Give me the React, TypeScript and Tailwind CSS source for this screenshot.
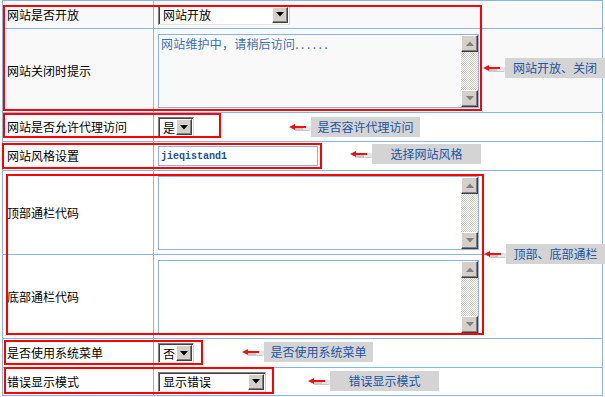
import React from "react";

const Tri: React.FC<{ down?: boolean; color?: string }> = ({ down = true, color = "#000" }) => (
  <svg width="8" height="5" viewBox="0 0 8 5">
    {down ? <polygon points="0,0 8,0 4,4.5" fill={color} /> : <polygon points="0,5 8,5 4,0.5" fill={color} />}
  </svg>
);

const Raised: React.FC<{ children: React.ReactNode; className?: string }> = ({ children, className = "" }) => (
  <div
    className={`flex items-center justify-center bg-[#d4d0c8] border border-t-[#ffffff] border-l-[#ffffff] border-r-[#404040] border-b-[#404040] shadow-[inset_-1px_-1px_0_#808080] ${className}`}
  >
    {children}
  </div>
);

const Select: React.FC<{ value: string; w: string }> = ({ value, w }) => (
  <div
    className={`flex h-[20px] ${w} items-center border border-t-[#808080] border-l-[#808080] border-r-[#d4d0c8] border-b-[#e4e4e4] bg-white shadow-[inset_1px_1px_0_#404040]`}
  >
    <span className="flex-1 pl-[4px] pt-[1px] text-[12px] leading-none text-black">{value}</span>
    <Raised className="mr-[1px] h-[16px] w-[16px]">
      <Tri />
    </Raised>
  </div>
);

const ScrollBar: React.FC = () => (
  <div className="flex h-full w-[17px] flex-col">
    <Raised className="h-[17px] w-[17px]">
      <Tri down={false} color="#808080" />
    </Raised>
    <div className="flex-1 bg-[repeating-conic-gradient(#cfcbc3_0_25%,#ffffff_0_50%)] bg-size-[2px_2px]" />
    <Raised className="h-[17px] w-[17px]">
      <Tri color="#808080" />
    </Raised>
  </div>
);

const TextArea: React.FC<{ text?: string; dots?: string; shaded?: boolean }> = ({ text, dots, shaded }) => (
  <div className={`flex h-[74px] w-[321px] border border-[#8db3e2] ${shaded ? "bg-[#f9f9f9]" : "bg-white"}`}>
    <div className="flex-1 pl-[2px] pt-[3px] text-[12px] leading-none tracking-[0.2px] text-[#3d6fae]">
      {text}
      {dots && <span className="tracking-[2.5px]">{dots}</span>}
    </div>
    <ScrollBar />
  </div>
);

const Row: React.FC<{ label: string; h: string; children: React.ReactNode; shaded?: boolean }> = ({
  label,
  h,
  children,
  shaded,
}) => (
  <div className={`flex ${h} border-x border-b border-[#8db3e2] ${shaded ? "bg-[#f9f9f9]" : "bg-white"}`}>
    <div className="flex w-[151px] items-center border-r border-[#8db3e2] pl-[4px] text-[12px] text-black">
      {label}
    </div>
    <div className="flex flex-1 items-center pl-[4px]">{children}</div>
  </div>
);

const Arrow: React.FC = () => (
  <svg width="22" height="10" viewBox="0 0 22 10">
    <rect x="5" y="4" width="17" height="5" rx="2" fill="#c9c9c9" />
    <rect x="14" y="4" width="8" height="4" fill="#e6e6e6" />
    <rect x="3" y="4" width="14" height="2" fill="#ee1111" />
    <polygon points="0,5 6,2 6,8" fill="#ee1111" />
  </svg>
);

const Note: React.FC<{ text: string; x: string; y: string; w: string }> = ({ text, x, y, w }) => (
  <div className={`absolute ${x} ${y} flex items-center`}>
    <Arrow />
    <div className={`flex h-[20px] ${w} items-center justify-center bg-[#d4d4d4] text-[12px] leading-none text-[#1b55a3]`}>
      {text}
    </div>
  </div>
);

const RedBox: React.FC<{ cls: string }> = ({ cls }) => (
  <div className={`pointer-events-none absolute border-2 border-[#ff0000] ${cls}`} />
);

export default function App() {
  return (
    <div className="relative h-[397px] w-[605px] overflow-hidden bg-white font-['Noto_Sans_CJK_SC',sans-serif]">
      <div className="ml-[2px] w-[601px] border-t border-[#8db3e2]">
        <Row label="网站是否开放" h="h-[28px]" shaded>
          <Select value="网站开放" w="w-[132px]" />
        </Row>
        <Row label="网站关闭时提示" h="h-[84px]" shaded>
          <TextArea text="网站维护中，请稍后访问" dots="......" shaded />
        </Row>
        <Row label="网站是否允许代理访问" h="h-[29px]">
          <Select value="是" w="w-[36px]" />
        </Row>
        <Row label="网站风格设置" h="h-[29px]">
          <div className="flex h-[20px] w-[160px] items-center border border-[#8db3e2] pl-[2px] font-['Liberation_Mono',monospace] text-[10px] font-bold text-[#1a4f8f]">
            jieqistand1
          </div>
        </Row>
        <Row label="顶部通栏代码" h="h-[84px]">
          <TextArea />
        </Row>
        <Row label="底部通栏代码" h="h-[84px]">
          <TextArea />
        </Row>
        <Row label="是否使用系统菜单" h="h-[29px]">
          <Select value="否" w="w-[36px]" />
        </Row>
        <Row label="错误显示模式" h="h-[28px]">
          <Select value="显示错误" w="w-[108px]" />
        </Row>
      </div>

      <RedBox cls="left-[3px] top-[5px] w-[479px] h-[106px]" />
      <RedBox cls="left-[3px] top-[113px] w-[218px] h-[25px]" />
      <RedBox cls="left-[2px] top-[143px] w-[320px] h-[26px]" />
      <RedBox cls="left-[6px] top-[174px] w-[478px] h-[161px]" />
      <RedBox cls="left-[4px] top-[340px] w-[199px] h-[25px]" />
      <RedBox cls="left-[4px] top-[367px] w-[270px] h-[27px]" />

      <Note text="网站开放、关闭" x="left-[483px]" y="top-[58px]" w="w-[100px]" />
      <Note text="是否容许代理访问" x="left-[289px]" y="top-[117px]" w="w-[109px]" />
      <Note text="选择网站风格" x="left-[350px]" y="top-[144px]" w="w-[109px]" />
      <Note text="顶部、底部通栏" x="left-[484px]" y="top-[244px]" w="w-[99px]" />
      <Note text="是否使用系统菜单" x="left-[242px]" y="top-[342px]" w="w-[109px]" />
      <Note text="错误显示模式" x="left-[308px]" y="top-[371px]" w="w-[109px]" />
    </div>
  );
}
